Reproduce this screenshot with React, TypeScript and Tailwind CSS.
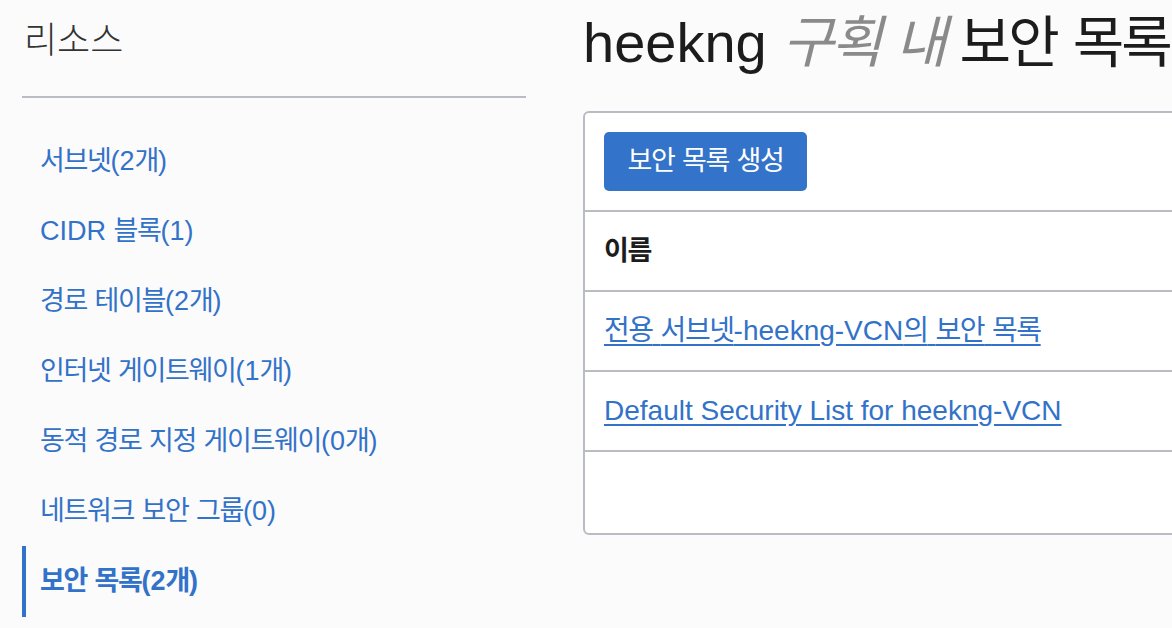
import React from "react";

const FONT = { fontFamily: '"Liberation Sans", "Noto Sans CJK KR", sans-serif' };

function K({ t }: { t: string }) {
  const parts = t.split(/([\uAC00-\uD7A3]+)/);
  return (
    <span>
      {parts.map((p, i) =>
        /[\uAC00-\uD7A3]/.test(p) ? (
          <span key={i} className="tracking-[-0.05em]">
            {p}
          </span>
        ) : (
          <React.Fragment key={i}>{p}</React.Fragment>
        )
      )}
    </span>
  );
}

const navItems = [
  "서브넷(2개)",
  "CIDR 블록(1)",
  "경로 테이블(2개)",
  "인터넷 게이트웨이(1개)",
  "동적 경로 지정 게이트웨이(0개)",
  "네트워크 보안 그룹(0)",
];

export default function App() {
  return (
    <div
      style={FONT}
      className="w-[1172px] h-[628px] overflow-hidden bg-[#fbfbfb] flex"
    >
      {/* Left column */}
      <div className="w-[583px] shrink-0 pl-[22px] pr-[57px] flex flex-col">
        <div className="h-[96px] flex items-start pt-[20px] pl-[2px]">
          <span className="text-[36px] font-light leading-[42px] text-[#333333]">
            리소스
          </span>
        </div>
        <div className="h-[2px] bg-[#b9bcc2]" />
        <div className="mt-[28px] flex flex-col">
          {navItems.map((n) => (
            <div
              key={n}
              className="h-[70px] flex items-center pl-[18px] text-[27px] text-[#3272c8] leading-none"
            >
              <K t={n} />
            </div>
          ))}
          <div className="h-[71px] flex items-center border-l-4 border-[#3272c8] pl-[14px] text-[27px] font-bold text-[#3272c8] leading-none">
            <K t="보안 목록(2개)" />
          </div>
        </div>
      </div>

      {/* Right column */}
      <div className="w-[720px] shrink-0 flex flex-col">
        <div className="h-[111px] pt-[11px] whitespace-nowrap">
          <span className="text-[56px] leading-[64px] text-[#1c1c1c]">
            heekng{" "}
            <span className="italic text-[#8a8a8a]">
              <K t="구획 내" />
            </span>{" "}
            <K t="보안 목록" />
          </span>
        </div>
        <div className="h-[424px] border-2 border-[#b9bcc2] rounded-[6px] bg-white flex flex-col">
          <div className="h-[99px] flex items-center pl-[19px] border-b-2 border-[#b9bcc2]">
            <button className="h-[59px] w-[203px] rounded-[5px] bg-[#3373ca] text-white text-[27px] leading-none flex items-center justify-center">
              <K t="보안 목록 생성" />
            </button>
          </div>
          <div className="h-[80px] flex items-center pl-[19px] border-b-2 border-[#b9bcc2] text-[27px] font-bold text-[#1c1c1c] leading-none">
            <K t="이름" />
          </div>
          <div className="h-[80px] flex items-center pl-[19px] border-b-2 border-[#b9bcc2] text-[28px] leading-none">
            <a href="#" className="text-[#3272c8] underline underline-offset-[4px]">
              <K t="전용 서브넷-heekng-VCN의 보안 목록" />
            </a>
          </div>
          <div className="h-[80px] flex items-center pl-[19px] border-b-2 border-[#b9bcc2] text-[28px] leading-none">
            <a href="#" className="text-[#3272c8] underline underline-offset-[4px]">
              Default Security List for heekng-VCN
            </a>
          </div>
          <div className="flex-1" />
        </div>
      </div>
    </div>
  );
}
